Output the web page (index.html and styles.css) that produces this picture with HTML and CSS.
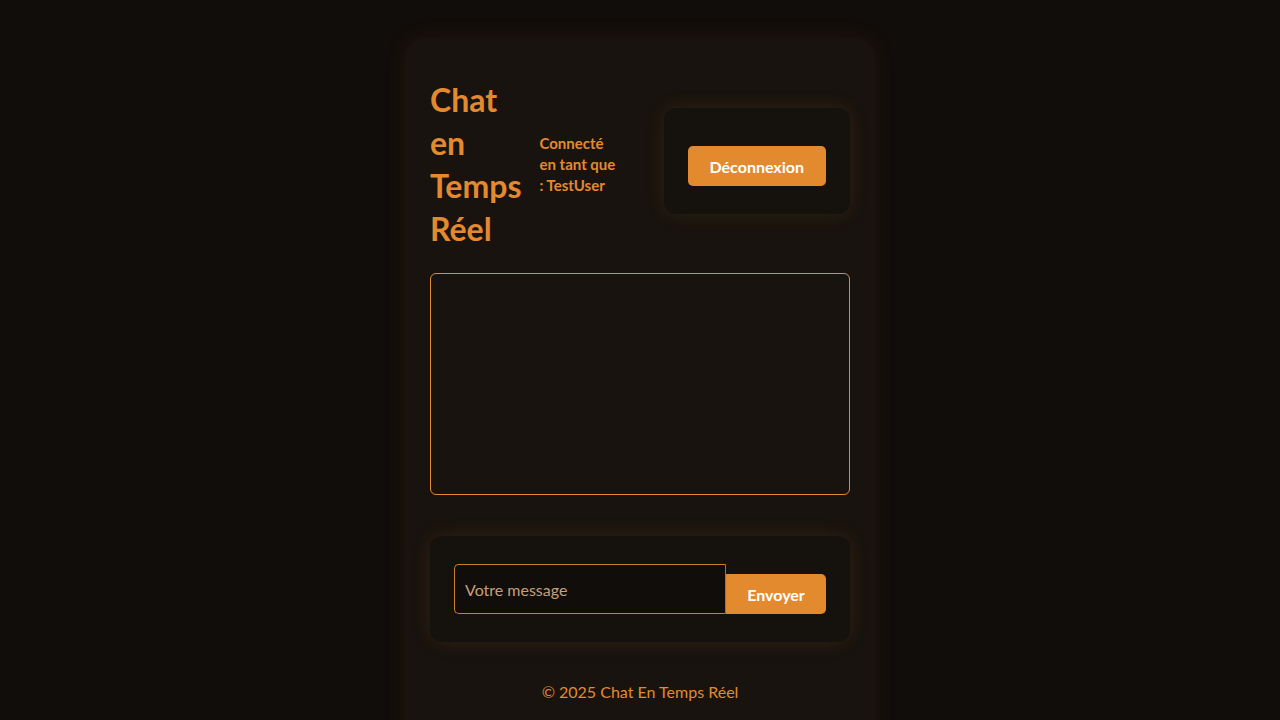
FILE: index.html
```html
<!DOCTYPE html>
<html lang="fr">
<head>
    <meta charset="UTF-8">
    <meta name="viewport" content="width=device-width, initial-scale=1.0">
    <title>Chat en Temps Réel</title>
    <link rel="stylesheet" href="styles.css">
</head>
<body>
    <div class="container">
        <header class="chat-header">
            <h1>Chat en Temps Réel</h1>
            <p class="user-info">Connecté en tant que : TestUser</p>
            <div class="logout-box">
                <button id="logoutBtn">Déconnexion</button>
            </div>
        </header>

        <div class="messages" id="messages">
            <!-- Messages will be added here -->
        </div>

        <form class="message-form" id="messageForm">
            <input type="text" id="messageInput" placeholder="Votre message">
            <button type="submit">Envoyer</button>
        </form>

        <footer class="chat-footer">
            <p>&copy; 2025 Chat En Temps Réel</p>
        </footer>
    </div>
</body>
</html>
```

FILE: styles.css
```css
body {
    font-family: 'Lato', 'Open Sans', sans-serif;
    margin: 0;
    padding: 0;
    background-color: #110d0a;
    color: #e38a2f;
    display: flex;
    flex-direction: column;
    align-items: center;
}

.container {
    width: 420px;
    margin-top: 38px;
    padding: 24px 25px 0 25px;
    background-color: #18130e;
    border-radius: 20px;
    box-shadow: 0 0 24px rgba(227, 138, 47, 0.08);
    min-height: 700px;
}

.chat-header {
    display: flex;
    align-items: center;
    margin-top: 16px;
}

.chat-header h1 {
    width: min-content;
    margin: 0;
    font-size: 32px;
    line-height: 43px;
    font-weight: bold;
    color: #e38a2f;
}

.user-info {
    width: 80px;
    margin: 0 0 0 18px;
    font-size: 15px;
    line-height: 21px;
    font-weight: bold;
    color: #e38a2f;
}

.logout-box {
    margin-left: auto;
    margin-bottom: 6px;
    padding: 38px 24px 28px 24px;
    background-color: #15110d;
    border-radius: 12px;
    box-shadow: 0 0 20px rgba(227, 138, 47, 0.12);
}

.logout-box button {
    display: block;
    height: 40px;
    padding: 0 22px;
    font-family: inherit;
    font-size: 16px;
    font-weight: bold;
    color: #fff;
    background-color: #e38a2f;
    border: none;
    border-radius: 5px;
    cursor: pointer;
}

.messages {
    height: 220px;
    margin-top: 23px;
    border: 1px solid #e38a2f;
    border-radius: 6px;
    background-color: #18130e;
}

.message-form {
    display: flex;
    align-items: flex-end;
    margin-top: 41px;
    padding: 28px 24px;
    background-color: #15110d;
    border-radius: 12px;
    box-shadow: 0 0 20px rgba(227, 138, 47, 0.12);
}

.message-form input {
    width: 272px;
    height: 50px;
    box-sizing: border-box;
    padding: 0 10px;
    font-family: inherit;
    font-size: 16px;
    color: #e8c9a0;
    background-color: #110d0a;
    border: 1px solid #c9802f;
    border-right-color: #a8702f;
    border-radius: 5px 0 0 5px;
    outline: none;
}

.message-form input::placeholder {
    color: #c4a07a;
}

.message-form button {
    width: 100px;
    height: 40px;
    font-family: inherit;
    font-size: 16px;
    font-weight: bold;
    color: #fff;
    background-color: #e38a2f;
    border: none;
    border-radius: 0 5px 5px 0;
    cursor: pointer;
}

.chat-footer {
    text-align: center;
    margin-top: 40px;
}

.chat-footer p {
    margin: 0;
    font-size: 16px;
    color: #e38a2f;
}
```
